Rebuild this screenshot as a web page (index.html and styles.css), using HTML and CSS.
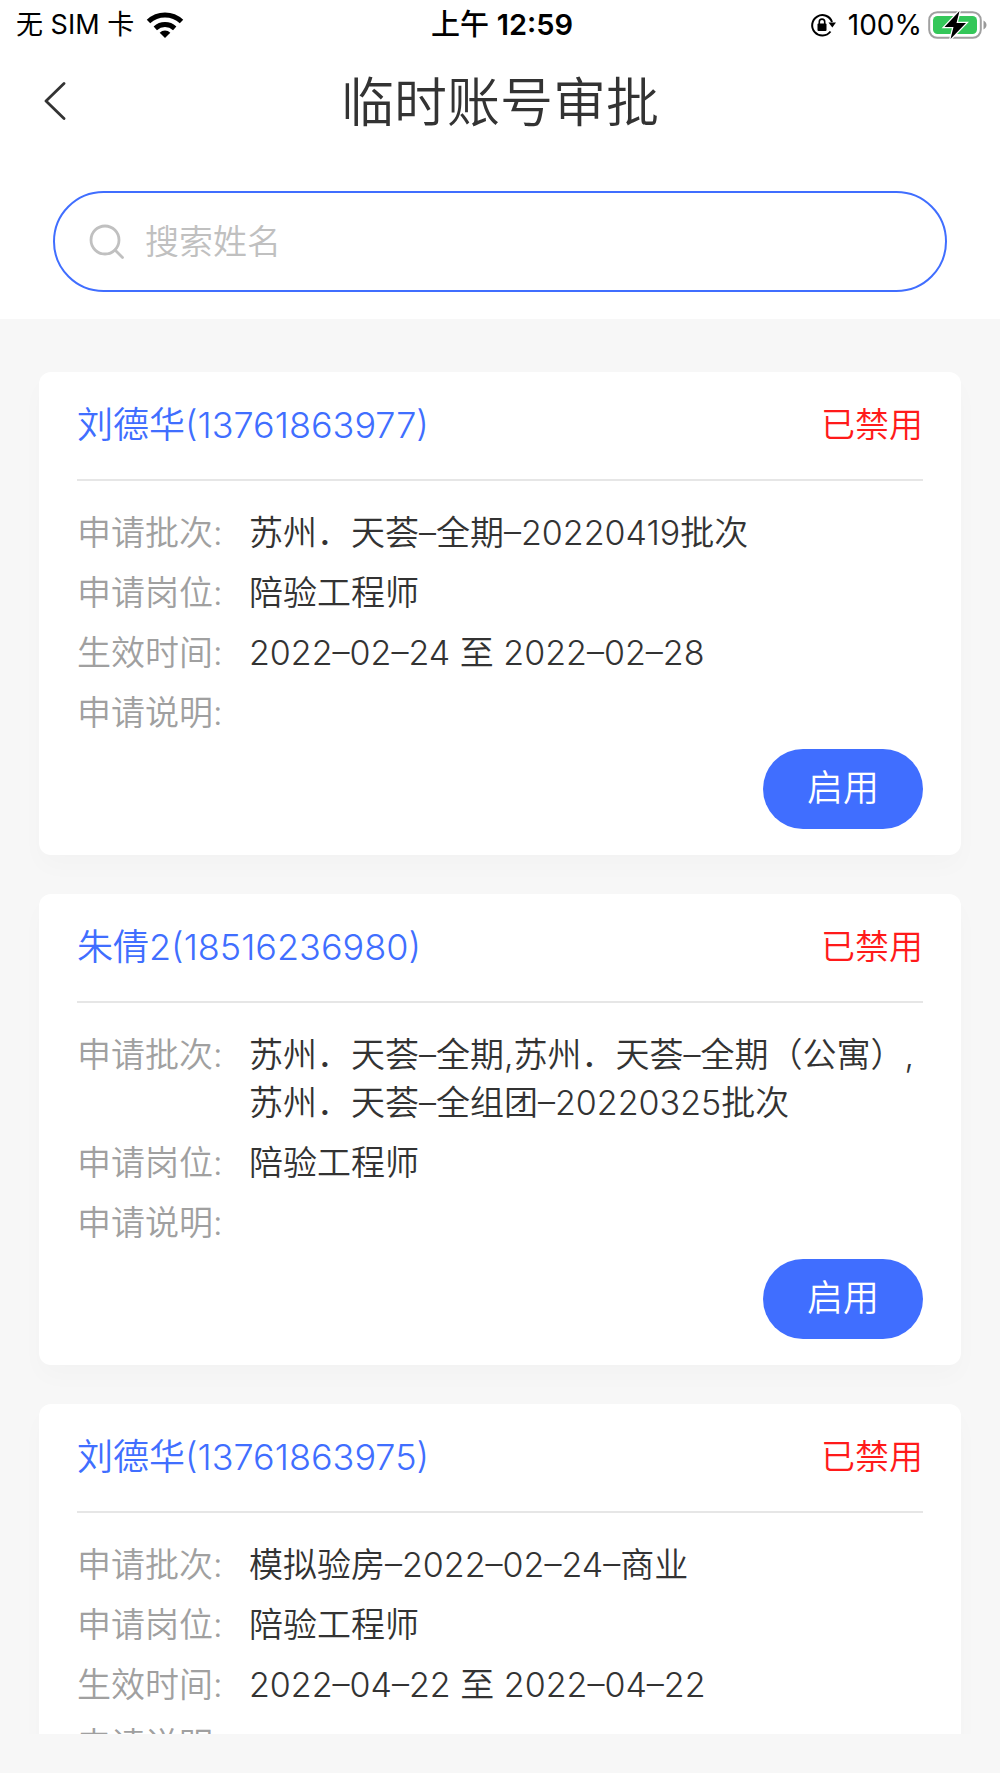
FILE: index.html
```html
<!DOCTYPE html>
<html lang="zh-CN">
<head>
<meta charset="utf-8">
<meta name="viewport" content="width=device-width, initial-scale=1">
<title>临时账号审批</title>
<link rel="stylesheet" href="styles.css">
</head>
<body>
<div class="app">
  <div class="status-bar">
    <div class="status-side">
      <span class="carrier">无 SIM 卡</span>
      <svg class="wifi" width="38" height="28" viewBox="0 0 38 28" aria-hidden="true">
        <g fill="none" stroke="#000" stroke-width="5">
          <path d="M2.5 10.5A24 24 0 0 1 35.500 10.500"/>
          <path d="M9.300 17.300A14.500 14.500 0 0 1 28.700 17.300"/>
        </g>
        <path d="M19 27l-5.300-5.300a7.600 7.600 0 0 1 10.600 0z"/>
      </svg>
    </div>
    <div class="clock">上午 <b>12:59</b></div>
    <div class="status-side status-right">
      <svg width="26" height="26" viewBox="0 0 26 26" aria-hidden="true">
        <path d="M20.500 19.500A10.200 10.200 0 1 1 22 10" fill="none" stroke="#000" stroke-width="2"/>
        <path d="M18.500 10.500h7.500l-3.700 5z"/>
        <rect x="7.500" y="11.500" width="9" height="7.500" rx="1"/>
        <path d="M9.300 12V9.800a2.700 2.700 0 0 1 5.400 0V12" fill="none" stroke="#000" stroke-width="1.600"/>
      </svg>
      <span class="percent">100%</span>
      <svg width="60" height="30" viewBox="0 0 60 30" aria-hidden="true">
        <rect x="1.200" y="2.200" width="51.600" height="25.600" rx="8" fill="#fff" stroke="#a0a0a0" stroke-width="2"/>
        <rect x="5" y="6" width="44" height="18" rx="4.500" fill="#34c759"/>
        <path d="M55.500 10.500c4 2 4 7 0 9z" fill="#999"/>
        <path d="M31.500 1L16.500 17h9l-3 12 15.500-16h-9.500z" fill="#000" stroke="#fff" stroke-width="2.500" paint-order="stroke"/>
      </svg>
    </div>
  </div>

  <header class="nav">
    <button class="back" type="button" aria-label="返回">
      <svg width="22" height="38" viewBox="0 0 22 38" aria-hidden="true">
        <path d="M20 1.500L2 19l18 17.500" fill="none" stroke="#333" stroke-width="2.800" stroke-linecap="round" stroke-linejoin="round"/>
      </svg>
    </button>
    <h1 class="title">临时账号审批</h1>
  </header>

  <form class="search">
    <label class="search-box">
      <svg width="36" height="36" viewBox="0 0 36 36" aria-hidden="true">
        <g fill="none" stroke="#c0c0c0" stroke-width="2.800" stroke-linecap="round">
          <circle cx="16" cy="16" r="14"/>
          <path d="M26 26l7.500 7.500"/>
        </g>
      </svg>
      <input class="search-input" type="text" placeholder="搜索姓名" aria-label="搜索姓名">
    </label>
  </form>

  <main class="list">
    <article class="card">
      <div class="card-head">
        <h2 class="name">刘德华(13761863977)</h2>
        <span class="state">已禁用</span>
      </div>
      <dl class="fields">
        <dt>申请批次:</dt><dd>苏州．天荟–全期–20220419批次</dd>
        <dt>申请岗位:</dt><dd>陪验工程师</dd>
        <dt>生效时间:</dt><dd>2022–02–24 至 2022–02–28</dd>
        <dt>申请说明:</dt><dd></dd>
      </dl>
      <div class="actions"><button class="enable" type="button">启用</button></div>
    </article>

    <article class="card">
      <div class="card-head">
        <h2 class="name">朱倩2(18516236980)</h2>
        <span class="state">已禁用</span>
      </div>
      <dl class="fields">
        <dt>申请批次:</dt><dd>苏州．天荟–全期,苏州．天荟–全期（公寓）,<wbr>苏州．天荟–全组团–20220325批次</dd>
        <dt>申请岗位:</dt><dd>陪验工程师</dd>
        <dt>申请说明:</dt><dd></dd>
      </dl>
      <div class="actions"><button class="enable" type="button">启用</button></div>
    </article>

    <article class="card">
      <div class="card-head">
        <h2 class="name">刘德华(13761863975)</h2>
        <span class="state">已禁用</span>
      </div>
      <dl class="fields">
        <dt>申请批次:</dt><dd>模拟验房–2022–02–24–商业</dd>
        <dt>申请岗位:</dt><dd>陪验工程师</dd>
        <dt>生效时间:</dt><dd>2022–04–22 至 2022–04–22</dd>
        <dt>申请说明:</dt><dd></dd>
      </dl>
    </article>
  </main>
</div>
</body>
</html>
```
FILE: styles.css
```css
* {
  box-sizing: border-box;
}

body {
  margin: 0;
  background: #f7f7f7;
  color: #333;
  font-family: Inter, "Noto Sans CJK SC", sans-serif;
  font-weight: 350;
}

button,
input {
  font: inherit;
}

.app {
  display: flex;
  flex-direction: column;
  height: 100vh;
  border-bottom: 5px solid #fff;
}

.status-bar {
  display: flex;
  align-items: center;
  height: 50px;
  padding: 0 12px 0 16px;
  background: #fff;
  color: #000;
  font-size: 28px;
  font-weight: 400;
  line-height: 48px;
}

.status-side {
  display: flex;
  flex: 1;
  align-items: center;
  gap: 12px;
}

.status-right {
  justify-content: flex-end;
}

.carrier {
  font-size: 27px;
}

.percent {
  margin-right: -6px;
}

.clock {
  font-size: 29px;
  font-weight: 500;
}

.clock b {
  font-weight: 600;
}

.nav {
  display: grid;
  grid-template-columns: 1fr auto 1fr;
  align-items: center;
  height: 102px;
  padding: 0 44px;
  background: #fff;
}

.back {
  display: flex;
  justify-self: start;
  padding: 0;
  border: 0;
  background: none;
}

.title {
  margin: 0;
  padding-top: 4px;
  font-size: 53px;
  font-weight: inherit;
  line-height: 80px;
}

.search {
  padding: 39px 53px 27px;
  background: #fff;
}

.search-box {
  display: flex;
  align-items: center;
  gap: 20px;
  height: 101px;
  padding: 0 34px;
  border: 2px solid #406eff;
  border-radius: 51px;
}

.search-input {
  flex: 1;
  min-width: 0;
  padding: 0;
  border: 0;
  outline: 0;
  background: none;
  font-size: 34px;
}

.search-input::placeholder {
  color: #c0c0c0;
  opacity: 1;
}

.list {
  display: flex;
  flex: 1;
  flex-direction: column;
  gap: 39px;
  min-height: 0;
  margin-bottom: 39px;
  padding: 53px 39px 0;
  overflow: hidden;
}

.card {
  flex: none;
  padding: 0 38px 26px;
  border-radius: 12px;
  background: #fff;
  box-shadow: 0 12px 24px rgba(0, 0, 0, 0.02);
}

.card-head {
  display: flex;
  align-items: center;
  justify-content: space-between;
  height: 109px;
  padding-bottom: 7px;
  border-bottom: 2px solid #e6e6e6;
}

.name {
  margin: 0;
  color: #406eff;
  font-size: 36px;
  font-weight: inherit;
}

.state {
  color: #ff1a1a;
  font-size: 34px;
}

.fields {
  display: grid;
  grid-template-columns: 172px 1fr;
  row-gap: 12px;
  margin: 0;
  padding: 28px 0 12px;
  font-size: 34px;
  line-height: 48px;
}

.fields dt {
  color: #a0a0a0;
}

.fields dd {
  min-height: 48px;
  margin: 0;
}

.actions {
  display: flex;
  justify-content: flex-end;
}

.enable {
  width: 160px;
  height: 80px;
  padding: 0 0 9px;
  border: 0;
  border-radius: 40px;
  background: #406eff;
  color: #fff;
  font-size: 36px;
}
```
